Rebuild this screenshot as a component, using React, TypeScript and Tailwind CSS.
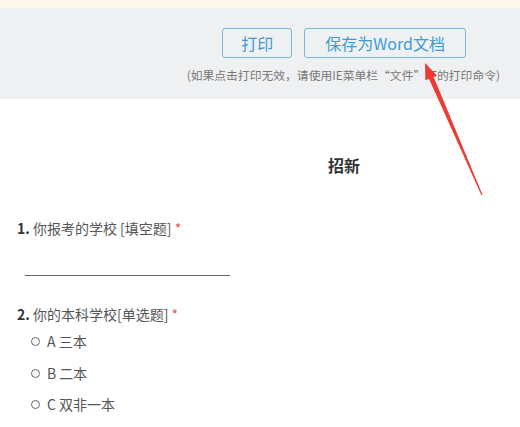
export default function App() {
  const font = { fontFamily: '"Noto Sans CJK SC", "Open Sans", sans-serif' };
  const options = ['A 三本', 'B 二本', 'C 双非一本'];

  return (
    <div className="relative w-[520px] h-[427px] overflow-hidden bg-white text-[#555]" style={font}>
      <div className="h-[8px] bg-[#fdf7ec]" />
      <div className="h-[91px] bg-[#eef0f2]">
        <div className="flex justify-end gap-[12px] pt-[20px] pr-[54px]">
          <button className="h-[30px] px-[18px] rounded-[3px] border border-[#7ab8db] text-[16px] text-[#3f9bd4] leading-none">
            打印
          </button>
          <button className="h-[30px] px-[20px] rounded-[3px] border border-[#7ab8db] text-[16px] text-[#3f9bd4] leading-none">
            保存为Word文档
          </button>
        </div>
        <p className="mt-[11px] pr-[20px] text-right text-[11.8px] text-[#777] leading-none">
          (如果点击打印无效，请使用IE菜单栏“文件”下的打印命令)
        </p>
      </div>

      <h1 className="mt-[58px] pl-[168px] text-center text-[16px] font-bold text-[#333] leading-none">招新</h1>

      <div className="mt-[48px] pl-[17px] text-[14px] leading-none">
        <span className="font-bold text-[#333]">1.</span> 你报考的学校 [填空题] <span className="text-[#e05555]">*</span>
      </div>
      <div className="ml-[25px] mt-[40px] w-[205px] border-b border-[#666]" />

      <div className="mt-[31px] pl-[17px] text-[14px] leading-none">
        <span className="font-bold text-[#333]">2.</span> 你的本科学校[单选题] <span className="text-[#e05555]">*</span>
      </div>
      <div className="mt-[5px] pl-[31px] flex flex-col">
        {options.map((o) => (
          <div key={o} className="h-[31.5px] flex items-center gap-[7px] text-[14px]">
            <span className="w-[9px] h-[9px] rounded-full border border-[#666]" />
            <span>{o}</span>
          </div>
        ))}
      </div>

      <svg className="absolute left-0 top-0 pointer-events-none" width="520" height="427">
        <polygon
          points="425,63 437,75.5 433.6,76.8 482.6,195 481.4,195.3 429,78.8 425.4,80.3"
          fill="#ec3a34"
        />
      </svg>
    </div>
  );
}
